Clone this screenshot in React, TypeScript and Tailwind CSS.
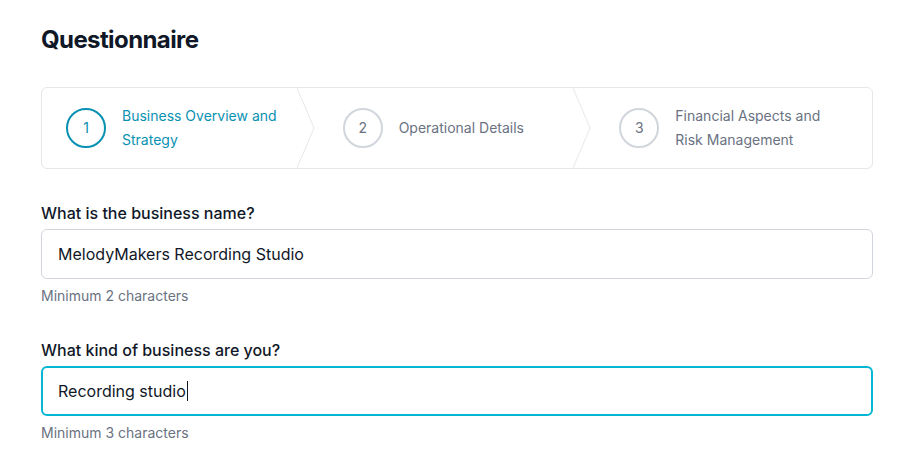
import React from 'react';

const steps = [
  { n: 1, label: ['Business Overview and', 'Strategy'], active: true },
  { n: 2, label: ['Operational Details'], active: false },
  { n: 3, label: ['Financial Aspects and', 'Risk Management'], active: false },
];

function Chevron() {
  return (
    <svg
      className="absolute right-[2px] top-0 h-full w-[20px]"
      viewBox="0 0 20 80"
      preserveAspectRatio="none"
      fill="none"
    >
      <path d="M0 0 L17 40 L0 80" stroke="#e5e7eb" strokeWidth="1" vectorEffect="non-scaling-stroke" />
    </svg>
  );
}

function Field({
  label,
  value,
  hint,
  focused,
}: {
  label: string;
  value: string;
  hint: string;
  focused?: boolean;
}) {
  return (
    <div>
      <div className="text-base leading-6 font-medium text-gray-900">{label}</div>
      <div
        className={`mt-1 h-[50px] flex items-center rounded-md bg-white text-base text-gray-900 ${
          focused ? 'border-2 border-[#06b6d4] px-[15px]' : 'border border-gray-300 px-4'
        }`}
      >
        <span>{value}</span>
        {focused && <span className="ml-px w-px h-5 bg-gray-900" />}
      </div>
      <div className="mt-[7px] text-sm leading-5 text-gray-500">{hint}</div>
    </div>
  );
}

export default function App() {
  return (
    <div className="min-h-screen bg-white px-[41px] pt-6" style={{ fontFamily: 'Inter, "Noto Sans", sans-serif' }}>
      <h1 className="text-2xl leading-8 font-bold tracking-tight text-gray-900">Questionnaire</h1>

      <div className="mt-[31px] w-[832px] h-[82px] grid grid-cols-3 rounded-md border border-gray-200 overflow-hidden">
        {steps.map((s, i) => (
          <div key={s.n} className="relative flex items-center gap-4 px-6">
            <div
              className={`w-10 h-10 shrink-0 rounded-full border-2 flex items-center justify-center text-sm ${
                s.active ? 'border-[#0891b2] text-[#0891b2]' : 'border-gray-300 text-gray-500'
              }`}
            >
              {s.n}
            </div>
            <div className={`text-sm leading-6 ${s.active ? 'text-[#0891b2]' : 'text-gray-500'}`}>
              {s.label.map((l) => (
                <div key={l}>{l}</div>
              ))}
            </div>
            {i < steps.length - 1 && <Chevron />}
          </div>
        ))}
      </div>

      <div className="mt-8 w-[832px] flex flex-col gap-8">
        <Field label="What is the business name?" value="MelodyMakers Recording Studio" hint="Minimum 2 characters" />
        <Field label="What kind of business are you?" value="Recording studio" hint="Minimum 3 characters" focused />
      </div>
    </div>
  );
}
